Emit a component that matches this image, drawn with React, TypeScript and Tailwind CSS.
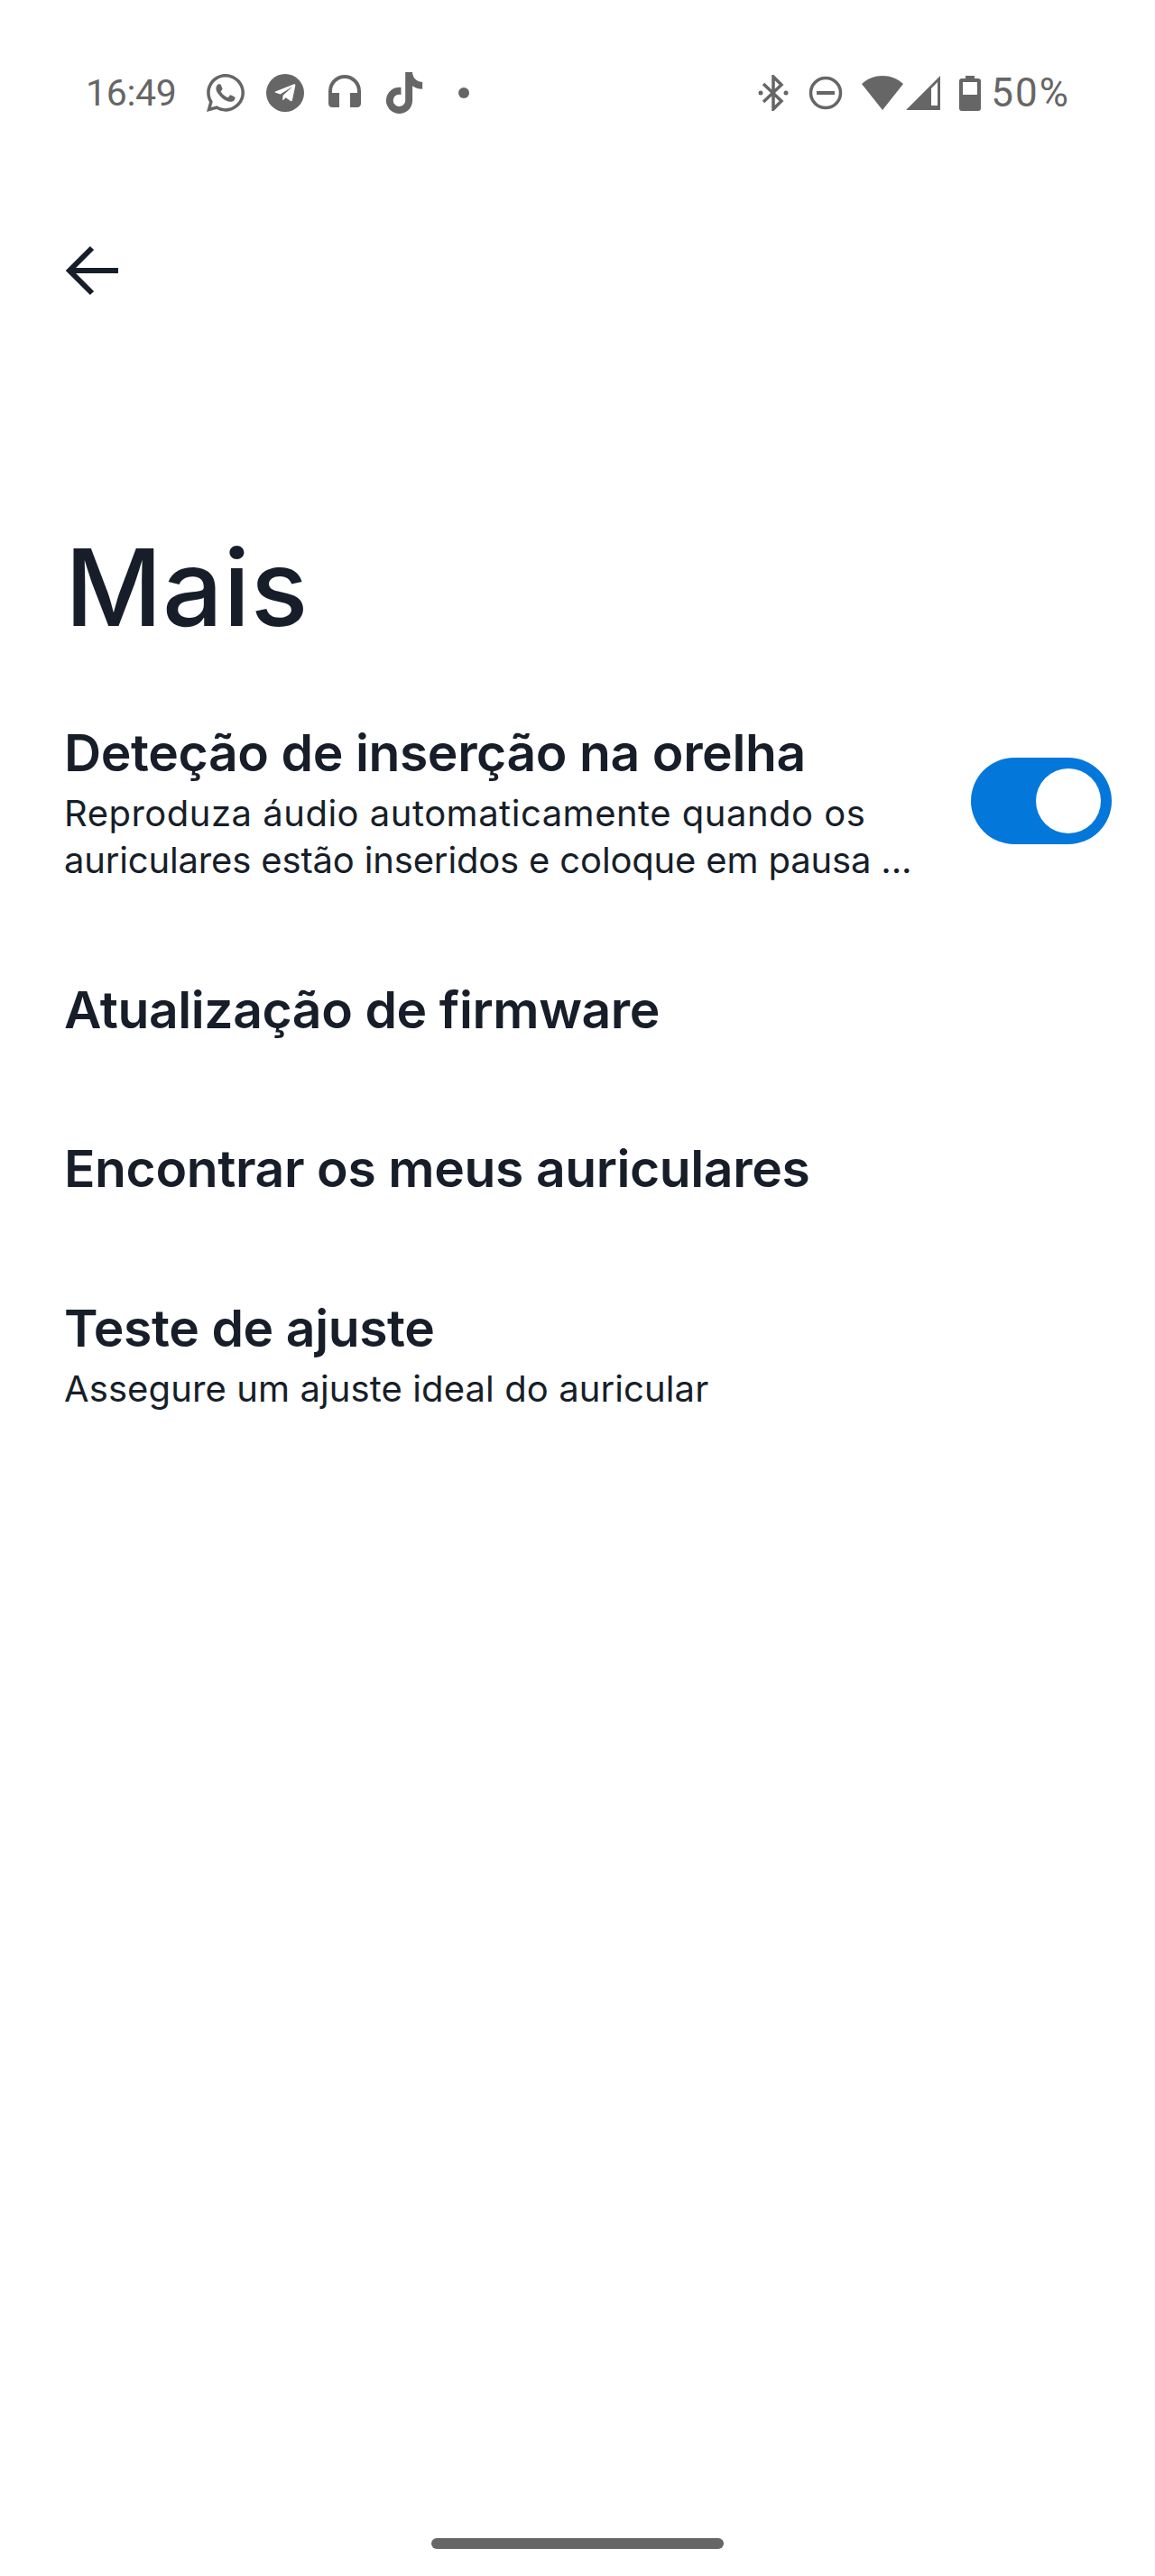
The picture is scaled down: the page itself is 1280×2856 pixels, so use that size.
import { FaWhatsapp, FaTelegramPlane, FaTiktok } from 'react-icons/fa';
import { MdHeadphones } from 'react-icons/md';

// ============================================
// Earbuds settings - "Mais" page
// ============================================

const BODY = "font-['Inter','Open_Sans',sans-serif]";

function StatusBar() {
  return (
    <div className="flex h-[206px] items-center justify-between pl-[95px] pr-[94px] text-[#666666] font-['Roboto',sans-serif]">
      <div className="flex items-center">
        <span className="w-[131px] text-[41px] leading-none tracking-[-0.3px]">16:49</span>
        <FaWhatsapp size={48} />
        <div className="ml-[21px] flex h-[42px] w-[42px] items-center justify-center rounded-full bg-[#666666]">
          <FaTelegramPlane size={26} className="text-white" />
        </div>
        <MdHeadphones size={48} className="ml-[21px] -mt-[4px]" />
        <FaTiktok size={46} className="ml-[19px]" />
        <div className="ml-[37px] h-[12px] w-[12px] rounded-full bg-[#666666]" />
      </div>
      <div className="flex items-center">
        <svg width="34" height="40" viewBox="0 0 34 40" fill="none" stroke="#666666" strokeWidth="3.5">
          <path d="M6 10 L26 29 L17 38 V2 L26 11 L6 30" />
          <circle cx="3" cy="20" r="2.5" fill="#666666" stroke="none" />
          <circle cx="31" cy="20" r="2.5" fill="#666666" stroke="none" />
        </svg>
        <svg width="38" height="38" viewBox="0 0 38 38" fill="none" stroke="#666666" strokeWidth="3.5" className="ml-[22px]">
          <circle cx="19" cy="19" r="16.5" />
          <path d="M9 19 H29" strokeWidth="4" />
        </svg>
        <svg width="46" height="38" viewBox="0 0 46 38" fill="#666666" className="ml-[21px]">
          <path d="M0 9 C13 -3 33 -3 46 9 L23 38 Z" />
        </svg>
        <svg width="38" height="38" viewBox="0 0 38 38" className="ml-[3px]">
          <path fillRule="evenodd" fill="#666666" d="M0 38 L38 0 V38 Z M28 14 V33 H35 V7 Z" />
        </svg>
        <svg width="24" height="39" viewBox="0 0 24 39" fill="#666666" className="ml-[21px]">
          <path fillRule="evenodd" d="M7 0 H17 V3 H21 Q24 3 24 6 V36 Q24 39 21 39 H3 Q0 39 0 36 V6 Q0 3 3 3 H7 Z M4 7 V21 H20 V7 Z" />
        </svg>
        <span className="ml-[11px] text-[44px] leading-none tracking-[2px]">50%</span>
      </div>
    </div>
  );
}

interface RowLine {
  text: string;
  spacing: string;
}

function Row({ title, lines, className = '' }: { title: string; lines?: RowLine[]; className?: string }) {
  return (
    <div className={className}>
      <div className="text-[57px] leading-[68px] font-semibold tracking-[-0.4px] text-[#171e29]">{title}</div>
      {lines && (
        <div className="mt-[7px]">
          {lines.map((line) => (
            <div key={line.text} className={`text-[40px] leading-[52px] text-[#171e29] ${line.spacing}`}>
              {line.text}
            </div>
          ))}
        </div>
      )}
    </div>
  );
}

export default function App() {
  return (
    <div className={`flex h-[2856px] w-[1280px] flex-col overflow-hidden bg-white ${BODY}`}>
      <StatusBar />

      {/* Back arrow */}
      <div className="mt-[66px] pl-[72px]">
        <svg width="60" height="56" viewBox="0 0 60 56" fill="none" stroke="#171e29" strokeWidth="6">
          <path d="M30 3 L5 28 L30 53 M5 28 H59" />
        </svg>
      </div>

      <div className="mt-[253px] pl-[71px]">
        <h1 className="ml-[1px] text-[118px] leading-[140px] font-[550] tracking-[0.4px] text-[#171e29]">Mais</h1>

        <div className="mt-[80px] flex items-center justify-between pr-[48px]">
          <Row
            title="Deteção de inserção na orelha"
            lines={[
              { text: 'Reproduza áudio automaticamente quando os', spacing: 'tracking-[0.5px]' },
              { text: 'auriculares estão inseridos e coloque em pausa ...', spacing: 'tracking-[-0.16px]' },
            ]}
          />
          {/* Toggle */}
          <div className="-mt-[6px] flex h-[96px] w-[156px] items-center justify-end rounded-full bg-[#0477db] pr-[12px]">
            <div className="h-[72px] w-[72px] rounded-full bg-white" />
          </div>
        </div>

        <Row title="Atualização de firmware" className="mt-[106px]" />
        <Row title="Encontrar os meus auriculares" className="mt-[108px]" />
        <Row
          title="Teste de ajuste"
          lines={[{ text: 'Assegure um ajuste ideal do auricular', spacing: 'tracking-[0.1px]' }]}
          className="mt-[109px]"
        />
      </div>

      {/* Gesture handle */}
      <div className="mx-auto mb-[30px] mt-auto h-[12px] w-[324px] rounded-full bg-[#666666]" />
    </div>
  );
}
